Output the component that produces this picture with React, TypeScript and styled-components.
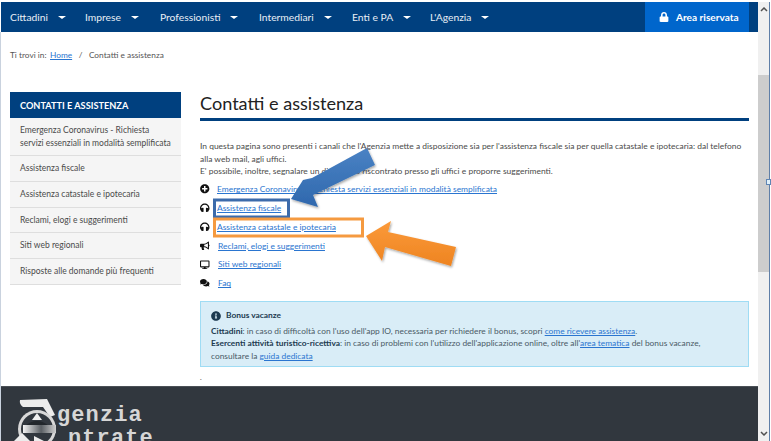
import * as React from 'react';
import styled, { createGlobalStyle } from 'styled-components';
import { FaBullhorn, FaComments, FaDesktop, FaHeadphones, FaInfoCircle, FaLock, FaPlusCircle } from 'react-icons/fa';

const NAVY = '#00407f';
const FONT = 'Lato, "Noto Sans", sans-serif';

const GlobalStyle = createGlobalStyle`
  html, body { margin: 0; padding: 0; background: #fff; overflow: hidden; }
  * { box-sizing: border-box; }
`;

const Frame = styled.div`
  position: relative;
  width: 771px;
  height: 441px;
  overflow: hidden;
  display: flex;
  padding-top: 2px;
  font-family: ${FONT};
  color: #444;
  background: #fff;
`;

const LeftEdge = styled.div`
  width: 1px;
  flex: none;
  background: #c9d2de;
  margin-top: 30px;
`;

const Page = styled.div`
  width: 757px;
  flex: none;
  display: flex;
  flex-direction: column;
`;

const Nav = styled.nav`
  height: 30px;
  flex: none;
  display: flex;
  align-items: stretch;
  background: ${NAVY};
  padding-left: 9px;
  padding-right: 9px;
`;

const NavItem = styled.a<{ $w: number }>`
  width: ${(p) => p.$w}px;
  display: flex;
  align-items: center;
  gap: 10px;
  color: #e8eef5;
  font-size: 10.3px;
  white-space: nowrap;
`;

const Caret = styled.span`
  width: 0;
  height: 0;
  border-left: 4px solid transparent;
  border-right: 4px solid transparent;
  border-top: 3.5px solid #fff;
`;

const AreaButton = styled.a`
  margin-left: auto;
  width: 104px;
  display: flex;
  align-items: center;
  padding-left: 14px;
  gap: 7px;
  background: #0066cc;
  color: #fff;
  font-size: 10.1px;
  font-weight: 700;
  white-space: nowrap;
`;

const Breadcrumb = styled.div`
  height: 46px;
  flex: none;
  padding: 0 0 0 9px;
  display: flex;
  align-items: center;
  gap: 3.5px;
  font-size: 8.3px;
  color: #555;
`;

const Sep = styled.span`
  margin: 0 3px;
`;

const StyledLink = styled.a`
  color: #2a75d0;
  text-decoration: underline;
`;

const Columns = styled.div`
  flex: none;
  height: 308px;
  padding: 14px 9px 0 9px;
  display: flex;
  gap: 19px;
`;

const Sidebar = styled.aside`
  width: 171px;
  flex: none;
`;

const SideHeader = styled.div`
  height: 26px;
  background: ${NAVY};
  color: #fff;
  font-size: 9.2px;
  font-weight: 700;
  display: flex;
  align-items: center;
  padding-left: 10px;
  white-space: nowrap;
`;

const SideRow = styled.div<{ $h: number }>`
  height: ${(p) => p.$h}px;
  background: #f5f5f5;
  border-bottom: 1px solid #dedede;
  display: flex;
  align-items: center;
  padding: 0 8px 0 10px;
  font-size: 8.5px;
  line-height: 13px;
  color: #4a4a4a;
`;

const Main = styled.main`
  flex: 1;
  min-width: 0;
`;

const Title = styled.h1`
  margin: 0;
  height: 29px;
  border-bottom: 3px solid ${NAVY};
  font-size: 18.1px;
  font-weight: 400;
  line-height: 22px;
  color: #222;
`;

const Intro = styled.p`
  margin: 19px 0 0;
  font-size: 8.45px;
  line-height: 12.6px;
  color: #4a4a4a;
  white-space: nowrap;
`;

const LinkList = styled.ul`
  list-style: none;
  margin: 2px 0 0;
  padding: 0;
`;

const LinkRow = styled.li`
  height: 18.8px;
  display: flex;
  align-items: center;
  font-size: 8.45px;
  white-space: nowrap;
`;

const IconSlot = styled.span<{ $w: number }>`
  width: ${(p) => p.$w}px;
  flex: none;
  display: flex;
  align-items: center;
  color: #111;
  font-size: 9.5px;
`;

const Notice = styled.div`
  margin-top: 8px;
  height: 66px;
  background: #d9edf7;
  border: 1px solid #9fdcf4;
  padding: 7px 10px 0;
  font-size: 8.4px;
  line-height: 12.6px;
  color: #4a5a66;
  white-space: nowrap;
`;

const NoticeTitle = styled.div`
  display: flex;
  align-items: center;
  gap: 5px;
  height: 14px;
  margin-bottom: 2px;
  font-weight: 700;
  color: #1c3a50;
`;

const NoticeStrong = styled.strong`
  color: #1c3a50;
`;

const Dot = styled.div`
  margin-top: 6px;
  font-size: 7px;
  line-height: 8px;
`;

const Footer = styled.footer`
  flex: 1;
  background: #31373e;
  border-top: 1px solid #4b5157;
  position: relative;
  padding: 17px 0 0 56px;
  font-family: "Liberation Mono", "DejaVu Sans Mono", monospace;
  font-weight: 700;
  color: #d6d6d6;
  font-size: 22px;
  line-height: 23px;
  letter-spacing: 1.1px;
`;

const LogoWord = styled.div<{ $indent: number }>`
  margin-left: ${(p) => p.$indent}px;
`;

const LogoMark = styled.svg`
  position: absolute;
  left: 9px;
  top: 9px;
`;

const Scrollbar = styled.div`
  width: 11px;
  flex: none;
  margin-top: 0;
  background: #f0f0f0;
  display: flex;
  flex-direction: column;
  justify-content: space-between;
  position: relative;
`;

const ScrollThumb = styled.div`
  position: absolute;
  left: 0;
  right: 0;
  top: 73px;
  height: 197px;
  background: #cdcdcd;
`;

const Chevron = styled.svg`
  display: block;
  margin: 5px auto;
`;

const RightEdge = styled.div`
  width: 2px;
  flex: none;
  background: linear-gradient(90deg, #5f7fa8 50%, #fff 50%);
`;

const Handle = styled.div`
  position: absolute;
  left: 766px;
  top: 179px;
  width: 5px;
  height: 6px;
  background: #dff0fa;
  border: 1px solid #5f86b5;
`;

const Annotations = styled.svg`
  position: absolute;
  left: 0;
  top: 0;
  pointer-events: none;
`;

const navItems = [
  { label: 'Cittadini', w: 75 },
  { label: 'Imprese', w: 75 },
  { label: 'Professionisti', w: 99 },
  { label: 'Intermediari', w: 93 },
  { label: 'Enti e PA', w: 78 },
  { label: "L'Agenzia", w: 70 },
];

const links = [
  { icon: <FaPlusCircle />, w: 17, label: 'Emergenza Coronavirus - Richiesta servizi essenziali in modalità semplificata' },
  { icon: <FaHeadphones />, w: 17, label: 'Assistenza fiscale' },
  { icon: <FaHeadphones />, w: 17, label: 'Assistenza catastale e ipotecaria' },
  { icon: <FaBullhorn />, w: 18, label: 'Reclami, elogi e suggerimenti' },
  { icon: <FaDesktop />, w: 18, label: 'Siti web regionali' },
  { icon: <FaComments />, w: 18, label: 'Faq' },
];

export default function App() {
  return (
    <Frame>
      <GlobalStyle />
      <LeftEdge />
      <Page>
        <Nav>
          {navItems.map((item) => (
            <NavItem key={item.label} $w={item.w}>
              {item.label}
              <Caret />
            </NavItem>
          ))}
          <AreaButton>
            <FaLock size={10} />
            Area riservata
          </AreaButton>
        </Nav>
        <Breadcrumb>
          Ti trovi in: <StyledLink>Home</StyledLink>
          <Sep>/</Sep> Contatti e assistenza
        </Breadcrumb>
        <Columns>
          <Sidebar>
            <SideHeader>CONTATTI E ASSISTENZA</SideHeader>
            <SideRow $h={38}>Emergenza Coronavirus - Richiesta servizi essenziali in modalità semplificata</SideRow>
            <SideRow $h={26}>Assistenza fiscale</SideRow>
            <SideRow $h={26}>Assistenza catastale e ipotecaria</SideRow>
            <SideRow $h={25}>Reclami, elogi e suggerimenti</SideRow>
            <SideRow $h={26}>Siti web regionali</SideRow>
            <SideRow $h={26}>Risposte alle domande più frequenti</SideRow>
          </Sidebar>
          <Main>
            <Title>Contatti e assistenza</Title>
            <Intro>
              In questa pagina sono presenti i canali che l'Agenzia mette a disposizione sia per l'assistenza fiscale sia per quella catastale e ipotecaria: dal telefono
              <br />
              alla web mail, agli uffici.
              <br />
              E' possibile, inoltre, segnalare un disservizio riscontrato presso gli uffici e proporre suggerimenti.
            </Intro>
            <LinkList>
              {links.map((link) => (
                <LinkRow key={link.label}>
                  <IconSlot $w={link.w}>{link.icon}</IconSlot>
                  <StyledLink>{link.label}</StyledLink>
                </LinkRow>
              ))}
            </LinkList>
            <Notice>
              <NoticeTitle>
                <FaInfoCircle size={10} />
                Bonus vacanze
              </NoticeTitle>
              <NoticeStrong>Cittadini</NoticeStrong>: in caso di difficoltà con l'uso dell'app IO, necessaria per richiedere il bonus, scopri <StyledLink>come ricevere assistenza</StyledLink>.
              <br />
              <NoticeStrong>Esercenti attività turistico-ricettiva</NoticeStrong>: in caso di problemi con l'utilizzo dell'applicazione online, oltre all'<StyledLink>area tematica</StyledLink> del bonus vacanze,
              <br />
              consultare la <StyledLink>guida dedicata</StyledLink>
            </Notice>
            <Dot>.</Dot>
          </Main>
        </Columns>
        <Footer>
          <LogoMark width="50" height="45" viewBox="0 0 50 45">
            <defs>
              <linearGradient id="logoShade" x1="0" y1="0" x2="1" y2="0">
                <stop offset="0" stopColor="#f4f4f4" />
                <stop offset="0.55" stopColor="#5a5f64" />
                <stop offset="1" stopColor="#d0d0d0" />
              </linearGradient>
            </defs>
            <path d="M10 4 L37 3 L45 19 L40 21 L33 11 L13 11 Q9 8 10 4 Z" fill="#ececec" />
            <circle cx="27" cy="33" r="19" fill="#d8d8d8" />
            <circle cx="27" cy="33" r="16" fill="#31373e" />
            <path d="M27 17 L32 24 H22 Z" fill="#f0f0f0" />
            <path d="M15 30 Q27 20 39 30 Z" fill="#22272c" />
            <path d="M13 29 H46 V37 H13 Z" fill="url(#logoShade)" />
            <path d="M4 45 L12 37 L20 45 Z" fill="#ececec" />
            <path d="M24 40 L34 45 H24 Z" fill="#ececec" />
          </LogoMark>
          <LogoWord $indent={0}>genzia</LogoWord>
          <LogoWord $indent={11}>ntrate</LogoWord>
        </Footer>
      </Page>
      <Scrollbar>
        <ScrollThumb />
        <Chevron width="8" height="5" viewBox="0 0 8 5">
          <path d="M1 4 L4 1 L7 4" fill="none" stroke="#505050" strokeWidth="1.5" />
        </Chevron>
        <Chevron width="8" height="5" viewBox="0 0 8 5">
          <path d="M1 1 L4 4 L7 1" fill="none" stroke="#505050" strokeWidth="1.5" />
        </Chevron>
      </Scrollbar>
      <RightEdge />
      <Handle />
      <Annotations width="771" height="441" viewBox="0 0 771 441">
        <defs>
          <linearGradient id="blueFill" x1="0" y1="0" x2="0" y2="1">
            <stop offset="0" stopColor="#4a82c4" />
            <stop offset="1" stopColor="#2f68ad" />
          </linearGradient>
          <linearGradient id="orangeFill" x1="0" y1="0" x2="0" y2="1">
            <stop offset="0" stopColor="#fb9a3a" />
            <stop offset="1" stopColor="#ee8421" />
          </linearGradient>
          <filter id="arrowShadow" x="-20%" y="-20%" width="140%" height="150%">
            <feDropShadow dx="1" dy="1.5" stdDeviation="1.2" floodColor="#000" floodOpacity="0.35" />
          </filter>
        </defs>
        <rect x="214.5" y="200" width="74" height="17" fill="none" stroke="#3c6bab" strokeWidth="3" />
        <rect x="214.5" y="219" width="148" height="17" fill="none" stroke="#f59a40" strokeWidth="3" />
        <polygon
          points="367,148 375,165 313,195 318,207 291,199 303,180 312,178"
          fill="url(#blueFill)"
          filter="url(#arrowShadow)"
        />
        <polygon
          points="366,236 391,221 388,232 456,247 451,266 385,247 382,261"
          fill="url(#orangeFill)"
          filter="url(#arrowShadow)"
        />
      </Annotations>
    </Frame>
  );
}
